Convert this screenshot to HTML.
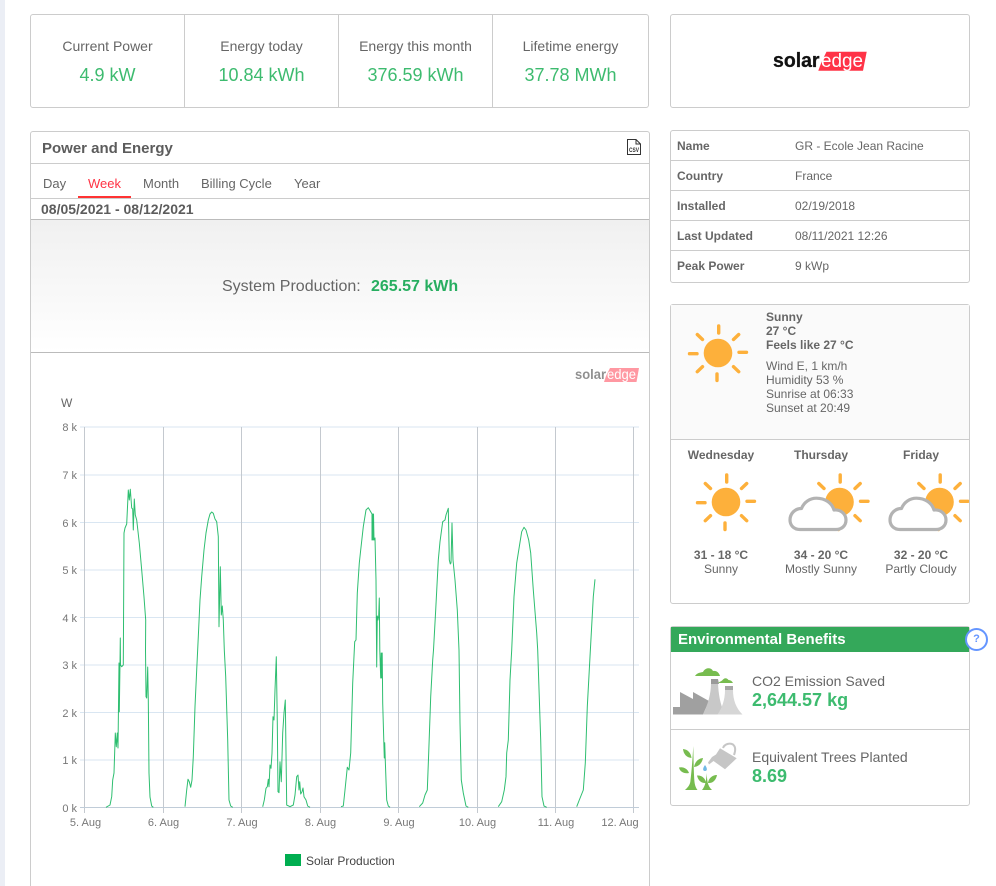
<!DOCTYPE html>
<html style="overflow:hidden;height:886px"><head><meta charset="utf-8"><style>
html,body{margin:0;padding:0;background:#fff}
body{width:996px;height:886px;position:relative;overflow:hidden;font-family:"Liberation Sans",sans-serif;color:#666}
#p{position:absolute;left:0;top:0;width:996px;height:886px;overflow:hidden}
.a{position:absolute;white-space:nowrap}
.box{position:absolute;box-sizing:border-box;border:1px solid #ccc;border-radius:3px;background:#fff}
.c{text-align:center;transform:translateX(-50%)}
.ln{position:absolute;background:#ccc;height:1px}
.kl{font-size:14px;line-height:16px;top:38px}
.kv{font-size:18px;line-height:20px;top:65px;color:#3dbb6f}
.tab{font-size:13px;line-height:16px;top:176px}
.n{font-size:12px;font-weight:bold;line-height:14px;left:677px}
.v{font-size:12px;line-height:14px;left:795px}
.w{font-size:12px;line-height:14px;left:766px}
.b{font-weight:bold}
.ax{font-size:11px;color:#777;line-height:12px}
</style></head><body><div id="p">
<div class="a" style="left:0;top:0;width:5px;height:886px;background:#ebeef5"></div>

<div class="box" style="left:30px;top:14px;width:619px;height:94px"></div>
<div class="a" style="left:184px;top:15px;width:1px;height:92px;background:#ccc"></div>
<div class="a" style="left:338px;top:15px;width:1px;height:92px;background:#ccc"></div>
<div class="a" style="left:492px;top:15px;width:1px;height:92px;background:#ccc"></div>
<div class="a c kl" style="left:107.5px">Current Power</div><div class="a c kv" style="left:107.5px">4.9 kW</div>
<div class="a c kl" style="left:261.5px">Energy today</div><div class="a c kv" style="left:261.5px">10.84 kWh</div>
<div class="a c kl" style="left:415.5px">Energy this month</div><div class="a c kv" style="left:415.5px">376.59 kWh</div>
<div class="a c kl" style="left:570.5px">Lifetime energy</div><div class="a c kv" style="left:570.5px">37.78 MWh</div>

<div class="box" style="left:670px;top:14px;width:300px;height:94px"></div>
<svg class="a" style="left:773px;top:50px" width="96" height="23" viewBox="0 0 96 23">
<polygon points="53.500,1.700 93.700,1.700 90,20.700 45.300,20.700 48.500,12" fill="#ff3347"/>
<text x="0" y="17" font-family="Liberation Sans" font-weight="bold" font-size="20" fill="#111" stroke="#111" stroke-width=".3" textLength="46.500" lengthAdjust="spacingAndGlyphs">solar</text>
<text x="48" y="17" font-family="Liberation Sans" font-size="19.500" fill="#fff" textLength="42" lengthAdjust="spacingAndGlyphs">edge</text>
</svg>

<div class="box" style="left:30px;top:131px;width:620px;height:780px"></div>
<div class="a b" style="left:42px;top:140px;font-size:15px;line-height:18px;color:#5c5c5c">Power and Energy</div>
<svg class="a" style="left:626px;top:138px" width="16" height="18" viewBox="0 0 16 18"><path d="M1.500 1.500H10L14.500 6V16.500H1.500Z M10 1.500V6H14.500" fill="#fff" stroke="#333" stroke-width="1"/><text x="8" y="14" text-anchor="middle" font-family="Liberation Sans" font-weight="bold" font-size="6" fill="#333" textLength="10" lengthAdjust="spacingAndGlyphs">CSV</text></svg>
<div class="ln" style="left:31px;top:163px;width:618px"></div>
<div class="a tab" style="left:43px">Day</div>
<div class="a tab" style="left:88px;color:#ff3344">Week</div>
<div class="a tab" style="left:143px">Month</div>
<div class="a tab" style="left:201px">Billing Cycle</div>
<div class="a tab" style="left:294px">Year</div>
<div class="a" style="left:78px;top:196px;width:53px;height:3px;background:#ff3333"></div>
<div class="ln" style="left:31px;top:198px;width:618px"></div>
<div class="a b" style="left:41px;top:201px;font-size:14px;line-height:16px;color:#5c5c5c">08/05/2021 - 08/12/2021</div>
<div class="a" style="left:31px;top:219px;width:618px;height:134px;box-sizing:border-box;border-top:1px solid #bbb;border-bottom:1px solid #bbb;background:linear-gradient(#f0f0f0,#fff)"></div>
<div class="a" style="left:222px;top:277px;font-size:16px;line-height:19px">System Production:</div>
<div class="a b" style="left:371px;top:277px;font-size:16px;line-height:19px;color:#27ae60">265.57 kWh</div>

<svg class="a" style="left:575px;top:367px;opacity:.5" width="65" height="16" viewBox="0 0 65 16">
<polygon points="35,1 64,1 61.500,15 29,15 31,9" fill="#ff3347"/>
<text x="0" y="12" font-family="Liberation Sans" font-weight="bold" font-size="13.500" fill="#222" textLength="31" lengthAdjust="spacingAndGlyphs">solar</text>
<text x="32" y="12" font-family="Liberation Sans" font-size="13.500" fill="#fff" textLength="29" lengthAdjust="spacingAndGlyphs">edge</text>
</svg>

<div class="a" style="left:61px;top:396px;font-size:12px;line-height:14px">W</div>

<svg class="a" style="left:0;top:0" width="660" height="886" viewBox="0 0 660 886">
<g stroke="#d9e6f2" stroke-width="1" fill="none">
<path d="M80 427H639M80 475H639M80 522.500H639M80 570H639M80 617.500H639M80 665H639M80 712.500H639M80 760H639"/>
</g>
<g stroke="#c4c9cf" stroke-width="1" fill="none">
<path d="M84.500 427V813M163.500 427V813M241.500 427V813M320.500 427V813M398.500 427V813M477.500 427V813M555.500 427V813M633.500 427V813"/>
<path d="M80 807.500H639" stroke="#c0ccd8"/>
</g>
<g stroke="#00b050" stroke-width="1" stroke-opacity=".82" fill="none" stroke-linejoin="round">
<path d="M106 807.300L110 805L111.700 796.700L112.700 780L114 773L115.300 733L116.300 746.700L117.300 733L118 748L119 663L119.300 711.700L120 663L120.300 638L120.500 665L121.700 666.700L123.300 665L124 533L125 528L126.700 524L128.300 490L129.300 500L130.300 489.300L131.700 508L132.700 509L133.300 530L134.300 499L135.300 515L136.700 520L139.300 543L141.700 570L144 597L145.700 620L145.500 650L146 696.700L146.700 698L147.700 667L148.300 700L149 773L150 797L151.700 806L153.300 807.300"/>
<path d="M185 806.700L186.700 790L188 779.300L189.300 781.700L190.700 787.300L192 780L193.300 756.700L195 706.700L196.700 670L198.300 636.700L200 600L201.700 576.700L204 550L206 533L208.300 520L210 514L211.700 512L213.300 513.300L215 519L216.700 521.700L218.300 536.700L219 626.700L220.300 566.700L221.300 615L222.300 606L223.300 620L224.300 650L225.700 676.700L227.700 740L229 800L230.700 806L232.700 807.300"/>
<path d="M262.700 806.700L264.300 800L266 788.300L267.300 786.700L268.300 779.300L269 786.700L270 765L271 768.300L272 753.300L273 716.700L274 720L275 690L276.300 656.700L277.300 723L278 791.700L279 792.700L280 761.700L281.300 781.700L282.700 733L284 713L285.300 700L286.700 805L290 806.700L293.300 805L295 795L296.700 776.700L298 775L299 790L299.700 781.700L300.700 794L302 791.700L303 788L304 796.700L306 800L307.700 806L310 807.300"/>
<path d="M341 806.700L343.300 806L345 790L347.300 767.300L349 770L350.700 753L352.700 683L354.700 641.700L356 640L357.300 593L359.300 563L360.700 550L363.300 526.700L366 510L368.300 507.700L370.700 511.700L372 514L372 540L372.500 514L373 540L373.500 514L374 540L375 538L376 580L376.700 667L377.300 616L378 620L378.700 616L379.300 598L379.800 650L380.700 678L381.200 653L381.700 678L382.200 653L382.700 703L384.300 758L384.700 742.700L385.200 758L386.700 800L388.300 806L390 807.300"/>
<path d="M419.300 806.700L422.700 803L425 795L427.300 790L428.700 753L430.700 696.700L432.700 660L433.500 650L435.700 610L438.300 560L440 541.700L442.700 521.700L445 520L446 515L448.300 508.300L449.300 560L450.300 564L451 563L452 523L453 560L455 580L457.300 610L459 650L460 723L461.300 780L463.300 793L466 806L468.300 807.300"/>
<path d="M498.300 806.700L501.700 801.700L504.300 790L506 776.700L506.700 753L508.300 740L510 680L511.700 650L514 596.700L516.700 563L519.300 546.700L521.700 531.700L524 527.300L526 530L528.700 540L530.700 553L533.300 590L536.700 633L537.700 650L538.700 680L540.700 740L542 796.700L544 806L546.700 807.300"/>
<path d="M576.700 806.700L579.300 800L583.300 790L585.300 763L587.300 706.700L590 656.700L593.300 596.700L595 579.300"/>
</g>
</svg>
<div class="a ax" style="left:47px;width:30px;text-align:right;top:422px">8 k</div>
<div class="a ax" style="left:47px;width:30px;text-align:right;top:470px">7 k</div>
<div class="a ax" style="left:47px;width:30px;text-align:right;top:518px">6 k</div>
<div class="a ax" style="left:47px;width:30px;text-align:right;top:565px">5 k</div>
<div class="a ax" style="left:47px;width:30px;text-align:right;top:613px">4 k</div>
<div class="a ax" style="left:47px;width:30px;text-align:right;top:660px">3 k</div>
<div class="a ax" style="left:47px;width:30px;text-align:right;top:708px">2 k</div>
<div class="a ax" style="left:47px;width:30px;text-align:right;top:755px">1 k</div>
<div class="a ax" style="left:47px;width:30px;text-align:right;top:803px">0 k</div>
<div class="a ax c" style="left:85.500px;top:817px">5. Aug</div>
<div class="a ax c" style="left:163.500px;top:817px">6. Aug</div>
<div class="a ax c" style="left:242px;top:817px">7. Aug</div>
<div class="a ax c" style="left:320.500px;top:817px">8. Aug</div>
<div class="a ax c" style="left:399px;top:817px">9. Aug</div>
<div class="a ax c" style="left:477.500px;top:817px">10. Aug</div>
<div class="a ax c" style="left:556px;top:817px">11. Aug</div>
<div class="a ax c" style="left:620px;top:817px">12. Aug</div>
<div class="a" style="left:285px;top:854px;width:16px;height:12px;background:#00ae50"></div>
<div class="a" style="left:306px;top:854px;font-size:12px;line-height:14px;color:#444">Solar Production</div>

<div class="box" style="left:670px;top:130px;width:300px;height:153px"></div>
<div class="ln" style="left:671px;top:160px;width:298px"></div>
<div class="ln" style="left:671px;top:190px;width:298px"></div>
<div class="ln" style="left:671px;top:220px;width:298px"></div>
<div class="ln" style="left:671px;top:250px;width:298px"></div>
<div class="a n" style="top:139px">Name</div><div class="a v" style="top:139px">GR - Ecole Jean Racine</div>
<div class="a n" style="top:169px">Country</div><div class="a v" style="top:169px">France</div>
<div class="a n" style="top:199px">Installed</div><div class="a v" style="top:199px">02/19/2018</div>
<div class="a n" style="top:229px">Last Updated</div><div class="a v" style="top:229px">08/11/2021 12:26</div>
<div class="a n" style="top:259px">Peak Power</div><div class="a v" style="top:259px">9 kWp</div>

<div class="box" style="left:670px;top:304px;width:300px;height:300px;overflow:hidden"></div>
<div class="a" style="left:671px;top:305px;width:298px;height:134px;background:#fafafa;border-bottom:1px solid #ccc"></div>
<div class="a w b" style="top:310px">Sunny</div>
<div class="a w b" style="top:324px">27 °C</div>
<div class="a w b" style="top:338px">Feels like 27 °C</div>
<div class="a w" style="top:359px">Wind E, 1 km/h</div>
<div class="a w" style="top:373px">Humidity 53 %</div>
<div class="a w" style="top:387px">Sunrise at 06:33</div>
<div class="a w" style="top:401px">Sunset at 20:49</div>

<svg class="a" style="left:670px;top:300px" width="300" height="304" viewBox="670 300 300 304">
<defs>
<g id="sun"><circle r="14.300" fill="#fdb03b"/><g stroke="#fdb03b" stroke-width="3.400" stroke-linecap="round" fill="none"><path d="M.7-27V-20M-1 21V27.500M21 -.7H28.500M-21 .7H-28.500M15.500-13.500L20.700-18.500M-15.500-13.500L-20.700-18.500M-15.500 13.700L-20.700 18.700M15.500 13.700L20.700 18.700"/></g></g>
<path id="cl" d="M800 529.500C793.500 529.500 790 525 790 520C790 513.500 795 508.500 801.500 508.500C804 502 810 498.200 816.500 498.200C825 498.200 832 503 834 510C841 509.500 846 514 846 520C846 526 841.500 529.500 836 529.500Z" fill="#fff" stroke="#b3b3b3" stroke-width="3.200" stroke-linejoin="round"/>
</defs>
<use href="#sun" x="718" y="353"/>
<use href="#sun" x="726" y="502"/>
<use href="#sun" x="839.500" y="502"/><use href="#cl"/>
<use href="#sun" x="939.500" y="502"/><use href="#cl" x="100"/>
</svg>
<div class="a" style="left:969px;top:480px;width:1px;height:50px;background:#ccc"></div>
<div class="a b c" style="left:721px;top:448px;font-size:12px;line-height:14px">Wednesday</div>
<div class="a b c" style="left:821px;top:448px;font-size:12px;line-height:14px">Thursday</div>
<div class="a b c" style="left:921px;top:448px;font-size:12px;line-height:14px">Friday</div>
<div class="a b c" style="left:721px;top:548px;font-size:12px;line-height:14px">31 - 18 °C</div>
<div class="a c" style="left:721px;top:562px;font-size:12px;line-height:14px">Sunny</div>
<div class="a b c" style="left:821px;top:548px;font-size:12px;line-height:14px">34 - 20 °C</div>
<div class="a c" style="left:821px;top:562px;font-size:12px;line-height:14px">Mostly Sunny</div>
<div class="a b c" style="left:921px;top:548px;font-size:12px;line-height:14px">32 - 20 °C</div>
<div class="a c" style="left:921px;top:562px;font-size:12px;line-height:14px">Partly Cloudy</div>

<div class="box" style="left:670px;top:626px;width:300px;height:180px"></div>
<div class="a" style="left:671px;top:627px;width:298px;height:25px;background:#34a85a"></div>
<div class="a b" style="left:678px;top:631px;font-size:15px;line-height:18px;color:#fff">Environmental Benefits</div>
<div class="a" style="left:965px;top:628px;width:19px;height:19px;border:2px solid #6495ff;border-radius:50%;background:#fff;text-align:center;font-size:11px;font-weight:bold;line-height:19px;color:#6495ff">?</div>
<div class="ln" style="left:671px;top:729px;width:298px"></div>
<div class="a" style="left:752px;top:673px;font-size:14px;line-height:16px">CO2 Emission Saved</div>
<div class="a b" style="left:752px;top:690px;font-size:18px;line-height:21px;color:#3dbb6f">2,644.57 kg</div>
<div class="a" style="left:752px;top:749px;font-size:14px;line-height:16px">Equivalent Trees Planted</div>
<div class="a b" style="left:752px;top:766px;font-size:18px;line-height:21px;color:#3dbb6f">8.69</div>

<svg class="a" style="left:670px;top:660px" width="80" height="140" viewBox="0 0 80 140">
<path d="M3 54.500V47H10V32L23 39V32L39 41L33 54.500Z" fill="#a0a0a0"/>
<path d="M41 23H48C48.500 34 50 44 55 54.500H33C38 44 41 34 41 23Z" fill="#c8c8c8"/>
<path d="M41 19H48L49 24H41Z" fill="#9a9a9a"/>
<path d="M55 30H63C63 40 66 48 72.500 54.500H47.500C52 48 55 40 55 30Z" fill="#d6d6d6"/>
<path d="M55 26H63V30H55Z" fill="#a6a6a6"/>
<path d="M25 16C27 12.500 31 12.500 33 12C35 7.500 41 7 43 11C47 10.500 49 13 50 16Z" fill="#77bc4f"/>
<path d="M48 23C50 21.500 52 21 53 19.500C55 17.500 57 18 58.500 20C60.500 20 62 21 63 23Z" fill="#77bc4f"/>
<path d="M23.300 86C23.500 100 23.800 115 24.500 122C25 126 26 128 27.500 130H15C17 128 19.500 126 20.300 122C21.500 112 22.500 100 23.300 86Z" fill="#77bc4f"/>
<path d="M21.500 98C16.500 97.500 13.500 94 13 89C18 89.500 21 93 21.500 98ZM24 107C25 102 28 98.500 33 98C32 103 29 106.500 24 107ZM19 113C14.500 114 10 112 9 107.500C13 106.500 17.500 108.500 19 113Z" fill="#77bc4f"/>
<path d="M36.700 113C37 120 37.500 126 42 130H32C35.500 126 36.200 120 36.700 113Z" fill="#77bc4f"/>
<path d="M36 123C31 123.500 28 120 27 115.500C32 115 35.500 118.500 36 123ZM38 123C38.500 118.500 42 115 47 115C46 120 43 123.500 38 123Z" fill="#77bc4f"/>
<path d="M35 111C32.500 111 32.500 108.500 35 105C37.500 108.500 37.500 111 35 111Z" fill="#71b9e6"/>
<path d="M50 88.300L66.700 98.300L55 109.300L43.500 101L39 104.500L38 102.500L42 97L46 94.500Z" fill="#c6c6c6"/>
<path d="M53 88C54.500 84 60 82.500 63 84.500C66 87 65.500 91 64 95" fill="none" stroke="#c6c6c6" stroke-width="2"/>
</svg>
</div></body></html>
